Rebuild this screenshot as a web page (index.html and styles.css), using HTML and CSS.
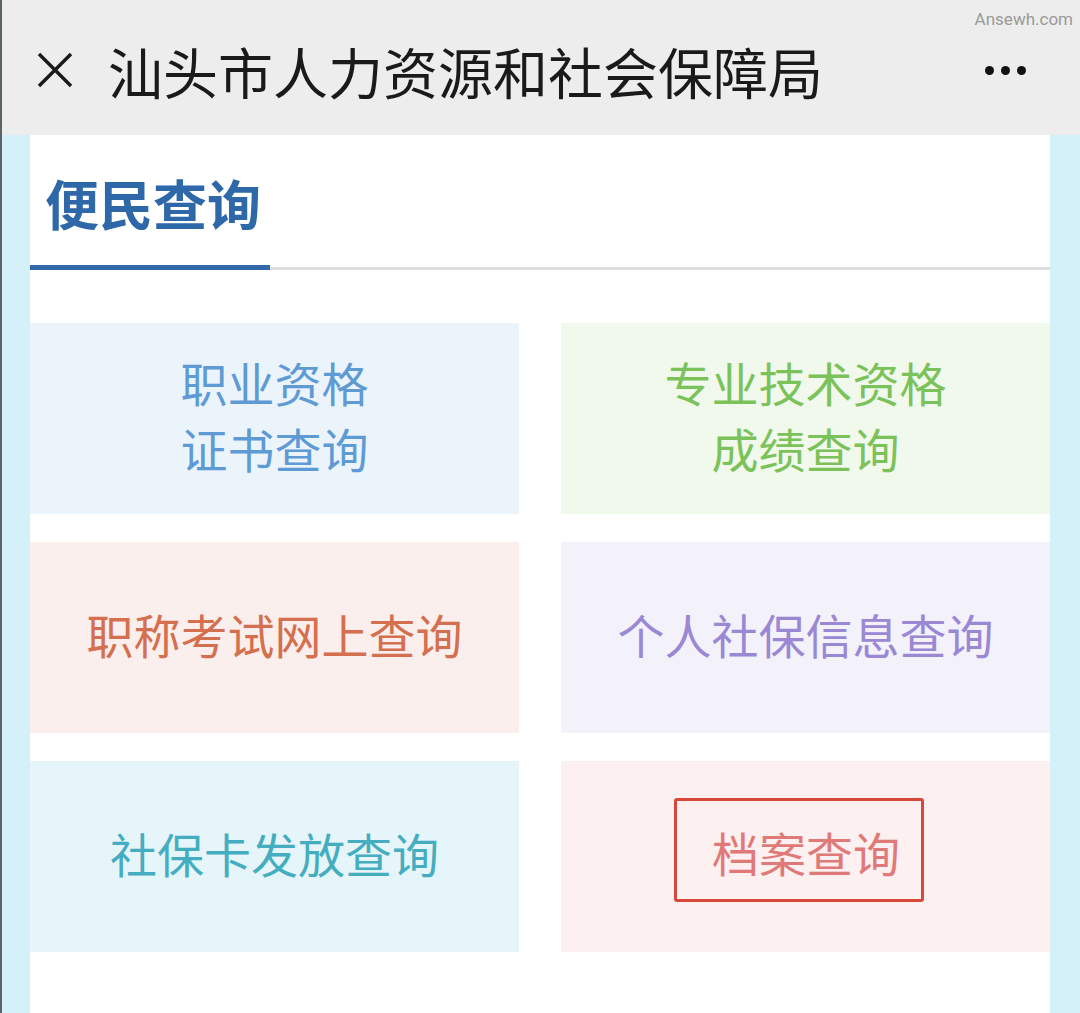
FILE: index.html
```html
<!DOCTYPE html>
<html lang="zh-CN">
<head>
    <meta charset="utf-8">
    <meta name="viewport" content="width=device-width, initial-scale=1.0">
    <title>汕头市人力资源和社会保障局</title>
    <link rel="stylesheet" href="styles.css">
</head>
<body>
    <header class="topbar">
        <span class="close">
            <svg width="36" height="36" viewBox="0 0 36 36">
                <path d="M2 2 L34 34 M34 2 L2 34" stroke="#1a1a1a" stroke-width="3.4" fill="none"/>
            </svg>
        </span>
        <h1 class="title">汕头市人力资源和社会保障局</h1>
        <span class="more">
            <i></i><i></i><i></i>
        </span>
        <span class="watermark">Ansewh.com</span>
    </header>

    <main class="page">
        <div class="panel">
            <nav class="tabs">
                <span class="tab tab--active">便民查询</span>
            </nav>

            <div class="grid">
                <a class="card card--blue">职业资格<br>证书查询</a>
                <a class="card card--green">专业技术资格<br>成绩查询</a>
                <a class="card card--orange">职称考试网上查询</a>
                <a class="card card--purple">个人社保信息查询</a>
                <a class="card card--teal">社保卡发放查询</a>
                <a class="card card--red"><span class="mark">档案查询</span></a>
            </div>
        </div>
    </main>
</body>
</html>
```

FILE: styles.css
```css
:root {
    --ff: "Noto Sans CJK SC", "Noto Sans", sans-serif;
    --side: #d4f0f8;
}

html, body {
    height: 100%;
}

body {
    font-family: var(--ff);

    margin: 0;
    border-left: 2px solid #5b6468;
    background-color: var(--side);
    overflow: hidden;
}

/* top bar */
.topbar {
    position: relative;

    height: 135px;
    padding-top: 5px;
    box-sizing: border-box;
    background-color: #ededed;

    display: flex;
    align-items: center;
}
.topbar .close {
    width: 36px;
    height: 36px;
    margin: 0 0 0 35px;

    display: flex;
}
.topbar .title {
    flex: 1;

    margin: 0 0 0 35px;
    font-size: 55px;
    font-weight: normal;
    line-height: 1;
    color: #1a1a1a;
}
.topbar .more {
    display: flex;
    gap: 7px;

    margin-right: 54px;
}
.topbar .more i {
    width: 9px;
    height: 9px;
    border-radius: 50%;
    background-color: #111;
}
.topbar .watermark {
    position: absolute;
    top: 9px;
    right: 7px;

    font-family: Roboto, "Liberation Sans", sans-serif;
    font-size: 17px;
    letter-spacing: 0;
    color: #9a9a9a;
}

/* page */
.page {
    height: calc(100% - 135px);
    padding: 0 30px 0 28px;
}
.panel {
    height: 100%;
    background-color: #fff;
}

.tabs {
    display: flex;

    height: 135px;
    border-bottom: 3px solid #dedede;
    box-sizing: border-box;
}
.tab {
    width: 240px;
    padding: 10px 0 0 15px;
    box-sizing: border-box;

    font-size: 54px;
    font-weight: bold;
    line-height: 116px;
    color: #2f68a9;
}
.tab--active {
    border-bottom: 5px solid #3068a8;
    margin-bottom: -3px;
}

.grid {
    display: grid;
    grid-template-columns: 1fr 1fr;
    grid-auto-rows: 191px;
    column-gap: 42px;
    row-gap: 28px;

    padding-top: 53px;
}
.card {
    display: flex;
    justify-content: center;
    align-items: center;

    padding-bottom: 8px;
    font-size: 47px;
    line-height: 66px;
    text-align: center;
    text-decoration: none;
}
.card--blue   { background-color: #ecf4fb; color: #5e9bd5; }
.card--green  { background-color: #f1f9ec; color: #7cc25a; }
.card--orange { background-color: #faefec; color: #d46f4f; }
.card--purple { background-color: #f3f2fb; color: #9a88d5; }
.card--teal   { background-color: #e6f5fa; color: #44adbf; }
.card--red    { background-color: #fdf0f0; color: #e07a78; }

.card .mark {
    display: inline-block;

    padding: 27px 21px 24px 35px;
    margin: 0 13px 6px 0;
    border: 3px solid #d8483a;
    border-radius: 3px;
    line-height: 47px;
}
```
